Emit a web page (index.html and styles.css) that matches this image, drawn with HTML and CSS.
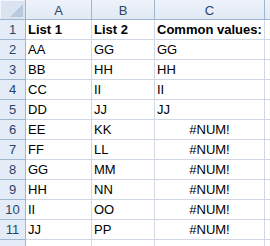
FILE: index.html
```html
<!DOCTYPE html>
<html>
<head>
<meta charset="utf-8">
<link rel="stylesheet" href="styles.css">
</head>
<body>
<div class="sheet">
  <div class="corner"><span class="tri"></span></div>
  <div class="colhead">A</div>
  <div class="colhead">B</div>
  <div class="colhead">C</div>
  <div class="colhead end"></div>

  <div class="rowhead">1</div>
  <div class="cell bold">List 1</div>
  <div class="cell bold">List 2</div>
  <div class="cell bold">Common values:</div>
  <div class="cell end"></div>

  <div class="rowhead">2</div>
  <div class="cell">AA</div>
  <div class="cell">GG</div>
  <div class="cell">GG</div>
  <div class="cell end"></div>

  <div class="rowhead">3</div>
  <div class="cell">BB</div>
  <div class="cell">HH</div>
  <div class="cell">HH</div>
  <div class="cell end"></div>

  <div class="rowhead">4</div>
  <div class="cell">CC</div>
  <div class="cell">II</div>
  <div class="cell">II</div>
  <div class="cell end"></div>

  <div class="rowhead">5</div>
  <div class="cell">DD</div>
  <div class="cell">JJ</div>
  <div class="cell">JJ</div>
  <div class="cell end"></div>

  <div class="rowhead">6</div>
  <div class="cell">EE</div>
  <div class="cell">KK</div>
  <div class="cell err">#NUM!</div>
  <div class="cell end"></div>

  <div class="rowhead">7</div>
  <div class="cell">FF</div>
  <div class="cell">LL</div>
  <div class="cell err">#NUM!</div>
  <div class="cell end"></div>

  <div class="rowhead">8</div>
  <div class="cell">GG</div>
  <div class="cell">MM</div>
  <div class="cell err">#NUM!</div>
  <div class="cell end"></div>

  <div class="rowhead">9</div>
  <div class="cell">HH</div>
  <div class="cell">NN</div>
  <div class="cell err">#NUM!</div>
  <div class="cell end"></div>

  <div class="rowhead">10</div>
  <div class="cell">II</div>
  <div class="cell">OO</div>
  <div class="cell err">#NUM!</div>
  <div class="cell end"></div>

  <div class="rowhead">11</div>
  <div class="cell">JJ</div>
  <div class="cell">PP</div>
  <div class="cell err">#NUM!</div>
  <div class="cell end"></div>

  <div class="rowhead last"></div>
  <div class="cell last"></div>
  <div class="cell last"></div>
  <div class="cell last"></div>
  <div class="cell last end"></div>
</div>
</body>
</html>
```

FILE: styles.css
```css
html, body {
  margin: 0;
  padding: 0;
  background: #ffffff;
  overflow: hidden;
}

.sheet {
  display: grid;
  grid-template-columns: 26px 66px 63px 110px 5px;
  grid-template-rows: repeat(12, 20px) 6px;
  width: 270px;
  height: 246px;
  overflow: hidden;
  font-family: "Liberation Sans", Arial, sans-serif;
  font-size: 13px;
  color: #000000;
}

.corner,
.colhead,
.rowhead {
  box-sizing: border-box;
  border-right: 1px solid #9eb6ce;
  border-bottom: 1px solid #9eb6ce;
  color: #2a4368;
  font-size: 13px;
}

.corner {
  position: relative;
  background: #dae4f1;
  box-shadow: inset 1px 1px 0 #f3f7fc;
}

.tri {
  position: absolute;
  right: 2px;
  bottom: 2px;
  width: 0;
  height: 0;
  border-left: 13px solid transparent;
  border-bottom: 13px solid #b9cadf;
}

.colhead {
  background: linear-gradient(#eef3fa, #e0e9f5);
  display: flex;
  align-items: center;
  justify-content: center;
  padding-top: 1px;
}

.rowhead {
  background: #e4ecf7;
  display: flex;
  align-items: flex-end;
  justify-content: center;
  padding-bottom: 2px;
}

.cell {
  box-sizing: border-box;
  border-right: 1px solid #d0d7e5;
  border-bottom: 1px solid #d0d7e5;
  display: flex;
  align-items: flex-end;
  padding: 0 2px 2px 2px;
  white-space: nowrap;
  overflow: hidden;
}

.last {
  border-bottom: none;
  padding: 0;
}

.bold {
  font-weight: bold;
}

.err {
  justify-content: center;
}

.end {
  border-right: none;
}
```
